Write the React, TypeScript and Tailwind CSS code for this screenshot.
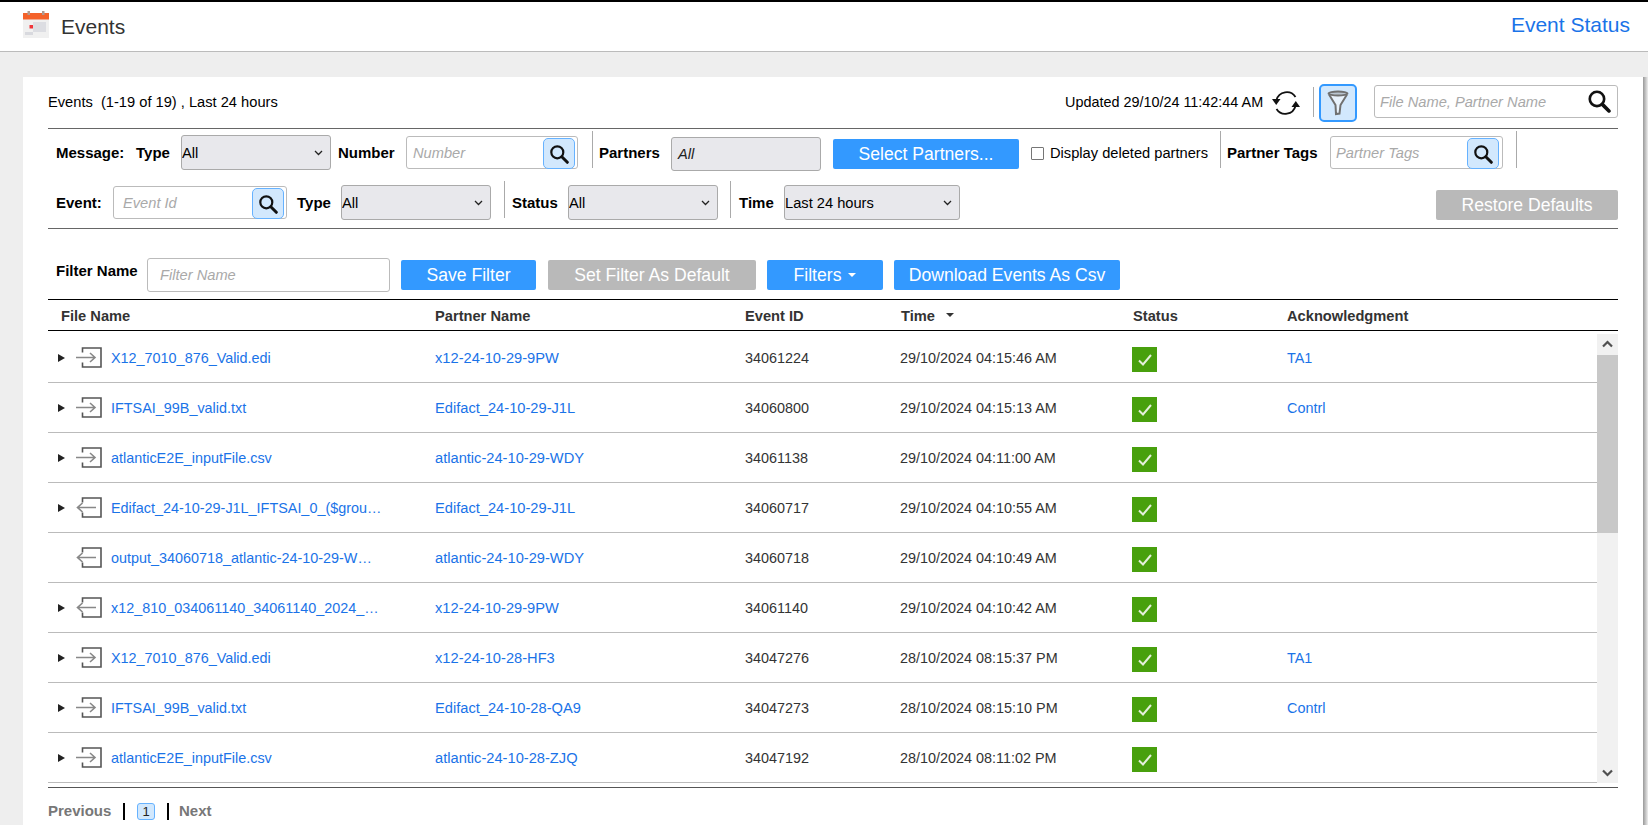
import React from "react";

function FileIcon({ out }: { out?: boolean }) {
  return (
    <svg width="26" height="21" viewBox="0 0 26 21" fill="none" className="shrink-0">
      <path d="M6.5 5.5 V1 H25 V20 H6.5 V15.5" stroke="#555" strokeWidth="1.6" />
      {out ? (
        <path d="M2 10.5 H20 M6.5 6 L1.5 10.5 L6.5 15" stroke="#888" strokeWidth="1.6" />
      ) : (
        <path d="M0 10.5 H18 M14 6 L19 10.5 L14 15" stroke="#888" strokeWidth="1.6" />
      )}
    </svg>
  );
}

function Lens({ size = 20 }: { size?: number }) {
  return (
    <svg width={size} height={size} viewBox="0 0 20 20" fill="none">
      <circle cx="8.3" cy="8.3" r="6" stroke="#111" strokeWidth="2.2" />
      <path d="M12.8 12.8 L18.3 18.3" stroke="#111" strokeWidth="3" strokeLinecap="round" />
    </svg>
  );
}

function SearchBtn({ x, y }: { x: number; y: number }) {
  return (
    <div
      className="absolute w-[32px] h-[31px] rounded-[5px] border border-[#66b2ff] bg-[#d2e8fd] flex items-center justify-center"
      style={{ left: x, top: y }}
    >
      <Lens />
    </div>
  );
}

function Sep({ x, y, h }: { x: number; y: number; h: number }) {
  return <div className="absolute w-px bg-[#aaaaaa]" style={{ left: x, top: y, height: h }} />;
}

function Label({ x, y, children }: { x: number; y: number; children: React.ReactNode }) {
  return (
    <div className="absolute font-bold text-[15px] leading-[20px] text-black whitespace-nowrap" style={{ left: x, top: y - 10 }}>
      {children}
    </div>
  );
}

function Sel({ x, y, w, value }: { x: number; y: number; w: number; value: string }) {
  return (
    <>
      <select
        defaultValue={value}
        className="absolute h-[35px] appearance-none bg-[#e8e8ec] border border-[#aaaaaa] rounded-[3px] text-[14.67px] text-black pl-0 pt-[1px]"
        style={{ left: x, top: y, width: w }}
      >
        <option>{value}</option>
      </select>
      <svg className="absolute" style={{ left: x + w - 17, top: y + 15 }} width="9" height="6" viewBox="0 0 9 6" fill="none">
        <path d="M1 1 L4.5 4.5 L8 1" stroke="#222" strokeWidth="1.3" />
      </svg>
    </>
  );
}

function Field({ x, y, w, h, ph, pad = 6 }: { x: number; y: number; w: number; h: number; ph: string; pad?: number }) {
  return (
    <div
      className="absolute bg-white border border-[#bbbbbb] rounded-[3px] text-[14.67px] italic text-[#a9a9a9] flex items-center"
      style={{ left: x, top: y, width: w, height: h, paddingLeft: pad }}
    >
      {ph}
    </div>
  );
}

function Btn({ x, y, w, h, gray, children }: { x: number; y: number; w: number; h: number; gray?: boolean; children: React.ReactNode }) {
  return (
    <div
      className={`absolute rounded-[2px] text-white text-[17.6px] flex items-center justify-center whitespace-nowrap ${gray ? "bg-[#b9b9b9]" : "bg-[#3399ff]"}`}
      style={{ left: x, top: y, width: w, height: h }}
    >
      {children}
    </div>
  );
}

const rows = [
  ["X12_7010_876_Valid.edi", "x12-24-10-29-9PW", "34061224", "29/10/2024 04:15:46 AM", "TA1", "in", 1],
  ["IFTSAI_99B_valid.txt", "Edifact_24-10-29-J1L", "34060800", "29/10/2024 04:15:13 AM", "Contrl", "in", 1],
  ["atlanticE2E_inputFile.csv", "atlantic-24-10-29-WDY", "34061138", "29/10/2024 04:11:00 AM", "", "in", 1],
  ["Edifact_24-10-29-J1L_IFTSAI_0_($grou…", "Edifact_24-10-29-J1L", "34060717", "29/10/2024 04:10:55 AM", "", "out", 1],
  ["output_34060718_atlantic-24-10-29-W…", "atlantic-24-10-29-WDY", "34060718", "29/10/2024 04:10:49 AM", "", "out", 0],
  ["x12_810_034061140_34061140_2024_…", "x12-24-10-29-9PW", "34061140", "29/10/2024 04:10:42 AM", "", "out", 1],
  ["X12_7010_876_Valid.edi", "x12-24-10-28-HF3", "34047276", "28/10/2024 08:15:37 PM", "TA1", "in", 1],
  ["IFTSAI_99B_valid.txt", "Edifact_24-10-28-QA9", "34047273", "28/10/2024 08:15:10 PM", "Contrl", "in", 1],
  ["atlanticE2E_inputFile.csv", "atlantic-24-10-28-ZJQ", "34047192", "28/10/2024 08:11:02 PM", "", "in", 1],
] as const;

export default function App() {
  return (
    <div className="relative w-[1648px] h-[825px] overflow-hidden bg-[#eeeeee] [font-family:Liberation_Sans,Arial,sans-serif] text-[14.67px] text-black">
      {/* header */}
      <div className="absolute left-0 top-0 w-full h-[52px] bg-white border-t-2 border-black border-b border-b-[#bbbbbb]">
        <svg className="absolute left-[22px] top-[8px]" width="28" height="28" viewBox="0 0 28 28">
          <rect x="1" y="3" width="26" height="25" fill="#f0f0f0" />
          <rect x="1" y="3" width="26" height="6.5" fill="#f4622a" />
          <rect x="5.5" y="1" width="2.5" height="4" fill="#b09a90" />
          <rect x="20" y="1" width="2.5" height="4" fill="#b09a90" />
          <rect x="11" y="12" width="13" height="10" fill="#dcdde2" />
          <rect x="3" y="22" width="8" height="3" fill="#d8d9de" />
          <rect x="7.5" y="15" width="3.5" height="3.5" fill="#f0353b" />
        </svg>
        <div className="absolute left-[61px] top-[11px] text-[21px] leading-[28px] text-[#333333]">Events</div>
        <div className="absolute right-[18px] top-[9px] text-[21px] leading-[28px] text-[#1a73e8]">Event Status</div>
      </div>

      {/* card */}
      <div className="absolute left-[23px] top-[77px] w-[1620px] h-[748px] bg-white" />
      <div className="absolute left-[1643px] top-[77px] w-[5px] h-[748px] bg-gradient-to-r from-[#999999] to-[#eeeeee]" />

      <div className="absolute left-[48px] top-[92px] leading-[20px] whitespace-pre">Events  (1-19 of 19) , Last 24 hours</div>
      <div className="absolute left-[1065px] top-[92px] leading-[20px] text-[14.4px] whitespace-nowrap">Updated 29/10/24 11:42:44 AM</div>
      <svg className="absolute left-[1272px] top-[89px]" width="28" height="28" viewBox="0 0 28 28" fill="none">
        <path d="M4.5 11 A10.5 10.5 0 0 1 23.5 8" stroke="#111" strokeWidth="1.8" />
        <path d="M23.5 17 A10.5 10.5 0 0 1 4.5 20" stroke="#111" strokeWidth="1.8" />
        <path d="M0 10 L8.5 10 L4.2 16 Z" fill="#111" />
        <path d="M19.5 18 L28 18 L23.8 12 Z" fill="#111" />
      </svg>
      <Sep x={1313} y={87} h={30} />
      <div className="absolute left-[1319px] top-[84px] w-[38px] h-[38px] rounded-[5px] border-2 border-[#3399ff] bg-[#d2e8fd] flex items-center justify-center">
        <svg width="24" height="26" viewBox="0 0 24 26" fill="none">
          <path d="M3 4.5 L9.5 15 L10 24 L13.5 23.5 L14.5 15 L21 4.5" stroke="#707070" strokeWidth="2" fill="#e8f2fc" />
          <ellipse cx="12" cy="3.5" rx="9.5" ry="2" stroke="#707070" strokeWidth="1.8" fill="#b9c4cf" />
        </svg>
      </div>
      <div className="absolute left-[1374px] top-[85px] w-[244px] h-[33px] bg-white border border-[#bbbbbb] rounded-[3px] italic text-[#a9a9a9] flex items-center pl-[5px]">
        File Name, Partner Name
        <div className="absolute right-[6px] top-[3px]"><Lens size={24} /></div>
      </div>
      <div className="absolute left-[48px] top-[128px] w-[1570px] h-px bg-[#666666]" />

      {/* row 1 */}
      <Label x={56} y={153}>Message:</Label>
      <Label x={136} y={153}>Type</Label>
      <Sel x={181} y={135} w={150} value="All" />
      <Label x={338} y={153}>Number</Label>
      <Field x={406} y={136} w={172} h={33} ph="Number" />
      <SearchBtn x={543} y={138} />
      <Sep x={592} y={131} h={37} />
      <Label x={599} y={153}>Partners</Label>
      <div className="absolute left-[671px] top-[137px] w-[150px] h-[34px] bg-[#e8e8ec] border border-[#aaaaaa] rounded-[3px] italic flex items-center pl-[6px] text-[#222222]">All</div>
      <Btn x={833} y={139} w={186} h={30}>Select Partners...</Btn>
      <input type="checkbox" readOnly className="absolute left-[1031px] top-[147px] w-[13px] h-[13px] m-0 appearance-none bg-white border border-[#767676] rounded-[1px]" />
      <div className="absolute left-[1050px] top-[143px] leading-[20px] whitespace-nowrap">Display deleted partners</div>
      <Sep x={1220} y={131} h={37} />
      <Label x={1227} y={153}>Partner Tags</Label>
      <Field x={1330} y={136} w={173} h={33} ph="Partner Tags" pad={5} />
      <SearchBtn x={1467} y={138} />
      <Sep x={1516} y={131} h={37} />

      {/* row 2 */}
      <Label x={56} y={203}>Event:</Label>
      <Field x={113} y={186} w={174} h={33} ph="Event Id" pad={9} />
      <SearchBtn x={252} y={188} />
      <Label x={297} y={203}>Type</Label>
      <Sel x={341} y={185} w={150} value="All" />
      <Sep x={504} y={181} h={37} />
      <Label x={512} y={203}>Status</Label>
      <Sel x={568} y={185} w={150} value="All" />
      <Sep x={730} y={181} h={37} />
      <Label x={739} y={203}>Time</Label>
      <Sel x={784} y={185} w={176} value="Last 24 hours" />
      <Btn x={1436} y={190} w={182} h={30} gray>Restore Defaults</Btn>
      <div className="absolute left-[48px] top-[228px] w-[1570px] h-px bg-[#666666]" />

      {/* filter row */}
      <Label x={56} y={271}>Filter Name</Label>
      <div className="absolute left-[147px] top-[258px] w-[243px] h-[34px] bg-white border border-[#bbbbbb] rounded-[3px] italic text-[#a9a9a9] flex items-center pl-[12px]">Filter Name</div>
      <Btn x={401} y={260} w={135} h={30}>Save Filter</Btn>
      <Btn x={548} y={260} w={208} h={30} gray>Set Filter As Default</Btn>
      <Btn x={767} y={260} w={116} h={30}>
        Filters
        <span className="ml-[7px] inline-block w-0 h-0 border-x-[4px] border-x-transparent border-t-[4px] border-t-white" />
      </Btn>
      <Btn x={894} y={260} w={226} h={30}>Download Events As Csv</Btn>

      {/* table header */}
      <div className="absolute left-[48px] top-[299px] w-[1570px] h-[32px] border-t border-b border-black font-bold text-[#333333]">
        <div className="absolute left-[13px] top-[6px] leading-[20px]">File Name</div>
        <div className="absolute left-[387px] top-[6px] leading-[20px]">Partner Name</div>
        <div className="absolute left-[697px] top-[6px] leading-[20px]">Event ID</div>
        <div className="absolute left-[853px] top-[6px] leading-[20px]">Time</div>
        <div className="absolute left-[898px] top-[13px] w-0 h-0 border-x-[4px] border-x-transparent border-t-[4px] border-t-[#333333]" />
        <div className="absolute left-[1085px] top-[6px] leading-[20px]">Status</div>
        <div className="absolute left-[1239px] top-[6px] leading-[20px]">Acknowledgment</div>
      </div>

      {/* rows */}
      {rows.map((r, i) => (
        <div key={i} className="absolute left-[48px] w-[1549px] h-[50px] border-b border-[#bbbbbb] text-[14.4px]" style={{ top: 333 + i * 50 }}>
          {r[6] ? (
            <div className="absolute left-[10px] top-[21px] w-0 h-0 border-y-[4px] border-y-transparent border-l-[7px] border-l-[#222222]" />
          ) : null}
          <div className="absolute left-[28px] top-[14px]"><FileIcon out={r[5] === "out"} /></div>
          <div className="absolute left-[63px] top-[15px] leading-[20px] text-[#1a73e8] whitespace-nowrap">{r[0]}</div>
          <div className="absolute left-[387px] top-[15px] leading-[20px] text-[14.67px] text-[#1a73e8] whitespace-nowrap">{r[1]}</div>
          <div className="absolute left-[697px] top-[15px] leading-[20px] text-[#333333]">{r[2]}</div>
          <div className="absolute left-[852px] top-[15px] leading-[20px] text-[#333333] whitespace-nowrap">{r[3]}</div>
          <div className="absolute left-[1084px] top-[14px] w-[25px] h-[25px] bg-[#48a00d] flex items-center justify-center">
            <svg width="14" height="12" viewBox="0 0 14 12" fill="none"><path d="M1 6.5 L5 10.5 L13 1" stroke="#e4f0dc" strokeWidth="2" /></svg>
          </div>
          <div className="absolute left-[1239px] top-[15px] leading-[20px] text-[#1a73e8]">{r[4]}</div>
        </div>
      ))}

      {/* scrollbar */}
      <div className="absolute left-[1597px] top-[334px] w-[21px] h-[449px] bg-[#f1f1f1]">
        <div className="absolute left-0 top-[21px] w-full h-[178px] bg-[#c8c8c8]" />
        <svg className="absolute left-[5px] top-[6px]" width="11" height="8" viewBox="0 0 11 8" fill="none"><path d="M1 6.5 L5.5 2 L10 6.5" stroke="#505050" strokeWidth="2.2" /></svg>
        <svg className="absolute left-[5px] top-[435px]" width="11" height="8" viewBox="0 0 11 8" fill="none"><path d="M1 1.5 L5.5 6 L10 1.5" stroke="#505050" strokeWidth="2.2" /></svg>
      </div>
      <div className="absolute left-[48px] top-[787px] w-[1570px] h-px bg-[#555555]" />

      {/* pagination */}
      <div className="absolute left-[48px] top-[801px] leading-[20px] text-[15px] font-bold text-[#777777]">Previous</div>
      <div className="absolute left-[123px] top-[803px] w-[2px] h-[17px] bg-black" />
      <div className="absolute left-[137px] top-[803px] w-[18px] h-[17px] rounded-[3px] border border-[#66b2ff] bg-[#d2e8fd] text-[13px] leading-[15px] text-center text-[#222222]">1</div>
      <div className="absolute left-[167px] top-[803px] w-[2px] h-[17px] bg-black" />
      <div className="absolute left-[179px] top-[801px] leading-[20px] text-[15px] font-bold text-[#777777]">Next</div>
    </div>
  );
}
